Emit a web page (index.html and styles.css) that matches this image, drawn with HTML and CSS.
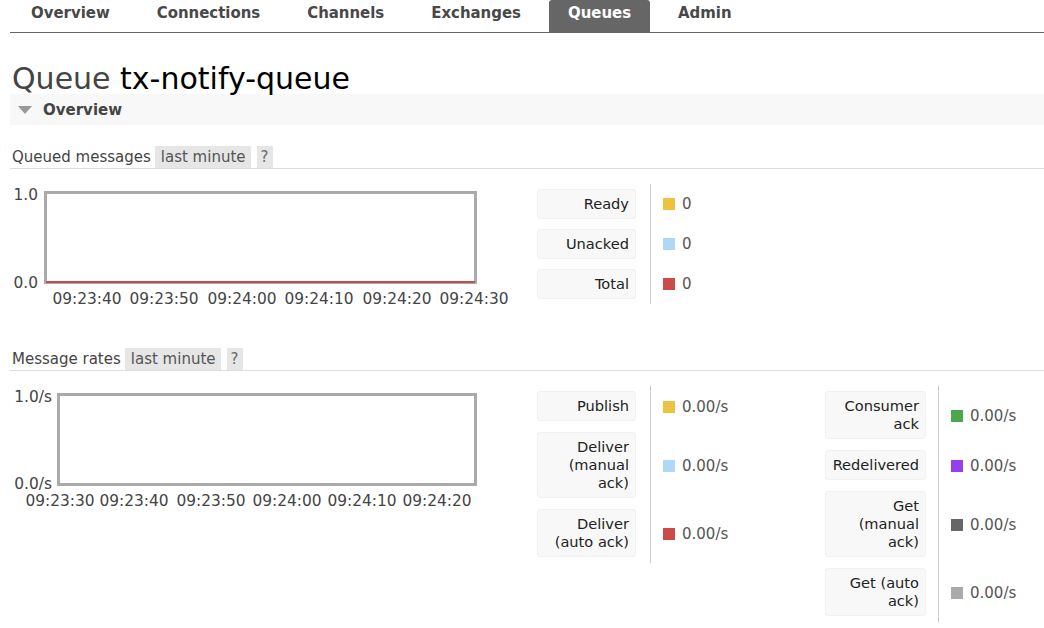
FILE: index.html
```html
<!DOCTYPE html>
<html>
<head>
<meta charset="utf-8">
<title>Queue tx-notify-queue</title>
<link rel="stylesheet" href="styles.css">
</head>
<body>
<div class="page">
  <ul class="tabs">
    <li><a>Overview</a></li>
    <li><a>Connections</a></li>
    <li><a>Channels</a></li>
    <li><a>Exchanges</a></li>
    <li class="active"><a>Queues</a></li>
    <li><a>Admin</a></li>
  </ul>

  <h1><span class="kind">Queue</span> tx-notify-queue</h1>

  <div class="section-bar"><span class="tri"></span>Overview</div>

  <div class="h3">Queued messages <span class="opt">last minute</span><span class="opt q">?</span></div>
  <div class="chart-row">
    <svg class="chart" width="527" height="120" viewBox="0 0 527 120">
      <rect x="35.5" y="8.5" width="430" height="90" fill="#fff" stroke="#aaa" stroke-width="3"/>
      <line x1="36" y1="98" x2="465" y2="98" stroke="#cb4b4b" stroke-width="2"/>
      <text class="ax" x="28" y="16" text-anchor="end">1.0</text>
      <text class="ax" x="28" y="104" text-anchor="end">0.0</text>
      <text class="ax" x="77" y="120" text-anchor="middle">09:23:40</text>
      <text class="ax" x="154" y="120" text-anchor="middle">09:23:50</text>
      <text class="ax" x="232" y="120" text-anchor="middle">09:24:00</text>
      <text class="ax" x="309" y="120" text-anchor="middle">09:24:10</text>
      <text class="ax" x="387" y="120" text-anchor="middle">09:24:20</text>
      <text class="ax" x="464" y="120" text-anchor="middle">09:24:30</text>
    </svg>
    <div class="legend">
      <div class="lg lg1 tight">
        <div class="lbl">Ready</div><div class="val"><span class="sw c-yellow"></span>0</div>
        <div class="lbl">Unacked</div><div class="val"><span class="sw c-blue"></span>0</div>
        <div class="lbl">Total</div><div class="val"><span class="sw c-red"></span>0</div>
      </div>
    </div>
  </div>

  <div class="h3 h3b">Message rates <span class="opt">last minute</span><span class="opt q">?</span></div>
  <div class="chart-row">
    <svg class="chart" width="527" height="120" viewBox="0 0 527 120">
      <rect x="48.5" y="8.5" width="417" height="90" fill="#fff" stroke="#aaa" stroke-width="3"/>
      <text class="ax" x="42" y="16" text-anchor="end">1.0/s</text>
      <text class="ax" x="42" y="103" text-anchor="end">0.0/s</text>
      <text class="ax" x="50" y="120" text-anchor="middle">09:23:30</text>
      <text class="ax" x="124" y="120" text-anchor="middle">09:23:40</text>
      <text class="ax" x="201" y="120" text-anchor="middle">09:23:50</text>
      <text class="ax" x="277" y="120" text-anchor="middle">09:24:00</text>
      <text class="ax" x="352" y="120" text-anchor="middle">09:24:10</text>
      <text class="ax" x="427" y="120" text-anchor="middle">09:24:20</text>
    </svg>
    <div class="legend">
      <div class="lg lg1">
        <div class="lbl">Publish</div><div class="val"><span class="sw c-yellow"></span>0.00/s</div>
        <div class="lbl">Deliver (manual ack)</div><div class="val"><span class="sw c-blue"></span>0.00/s</div>
        <div class="lbl">Deliver (auto ack)</div><div class="val"><span class="sw c-red"></span>0.00/s</div>
      </div>
      <div class="lg lg2">
        <div class="lbl">Consumer ack</div><div class="val"><span class="sw c-green"></span>0.00/s</div>
        <div class="lbl">Redelivered</div><div class="val"><span class="sw c-purple"></span>0.00/s</div>
        <div class="lbl">Get (manual ack)</div><div class="val"><span class="sw c-dgray"></span>0.00/s</div>
        <div class="lbl">Get (auto ack)</div><div class="val"><span class="sw c-lgray"></span>0.00/s</div>
      </div>
    </div>
  </div>
</div>
</body>
</html>
```

FILE: styles.css
```css
html, body {
  margin: 0;
  padding: 0;
  background: #fff;
}
body {
  font-family: "DejaVu Sans", Verdana, sans-serif;
  font-size: 15px;
  color: #444;
}
.page {
  padding-left: 10px;
}

/* tabs */
.tabs {
  list-style: none;
  margin: 0;
  padding: 0 0 0 2px;
  display: flex;
  gap: 9px;
  height: 32px;
  border-bottom: 1px solid #666;
}
.tabs li a {
  display: block;
  padding: 0 19px 6px;
  line-height: 26px;
  font-family: "DejaVu Sans Condensed", "DejaVu Sans", sans-serif;
  font-weight: bold;
  font-size: 16.6px;
  color: #484848;
}
.tabs li.active a {
  background: #666;
  color: #fff;
  border-radius: 3px 3px 0 0;
}

/* heading */
h1 {
  margin: 31px 0 0 2px;
  font-size: 30px;
  line-height: 30px;
  font-weight: normal;
  color: #000;
}
h1 .kind {
  color: #444;
}

.section-bar {
  height: 31px;
  background: #f8f8f8;
  display: flex;
  align-items: center;
  font-weight: bold;
  font-size: 15px;
  color: #444;
}
.tri {
  width: 0;
  height: 0;
  border-left: 7px solid transparent;
  border-right: 7px solid transparent;
  border-top: 8px solid #999;
  margin: 1px 11px 0 8px;
}

/* sub headers */
.h3 {
  margin-top: 21px;
  height: 22px;
  line-height: 22px;
  padding-left: 2px;
  border-bottom: 1px solid #ddd;
  display: flex;
  align-items: stretch;
  color: #444;
}
.h3b {
  margin-top: 44px;
}
.opt {
  background: #e6e6e6;
  padding: 0 5px 0 6px;
  margin-left: 4px;
  color: #555;
}
.opt.q {
  margin-left: 6px;
  padding: 0 4px;
  color: #666;
}

/* chart rows */
.chart-row {
  margin-top: 15px;
  display: flex;
  align-items: flex-start;
}
.chart {
  flex: none;
  overflow: visible;
  display: block;
}
.ax {
  font-family: "DejaVu Sans", Verdana, sans-serif;
  font-size: 15.4px;
  fill: #444;
}

.legend {
  display: flex;
  align-items: flex-start;
}
.lg {
  display: grid;
  column-gap: 14px;
  align-content: start;
}
.lg1 {
  grid-template-columns: 99px 175px;
}
.lg2 {
  grid-template-columns: 101px 100px;
  column-gap: 12px;
}
.lbl {
  margin: 5px 0 6px;
  padding: 5px 6px;
  border: 1px solid #f1f1f1;
  border-radius: 3px;
  background: #f8f8f8;
  text-align: right;
  line-height: 18px;
  font-size: 14.6px;
  color: #222;
  box-sizing: border-box;
  align-self: start;
}
.tight .lbl {
  margin: 5px 0 5px;
}
.val {
  border-left: 1px solid #ccc;
  padding-left: 12px;
  display: flex;
  align-items: center;
  font-size: 15px;
  color: #555;
}
.sw {
  width: 12px;
  height: 12px;
  margin-right: 7px;
  flex: none;
}
.c-yellow { background: #edc240; }
.c-blue { background: #afd8f8; }
.c-red { background: #cb4b4b; }
.c-green { background: #4da74d; }
.c-purple { background: #9440ed; }
.c-dgray { background: #666; }
.c-lgray { background: #aaa; }
```
